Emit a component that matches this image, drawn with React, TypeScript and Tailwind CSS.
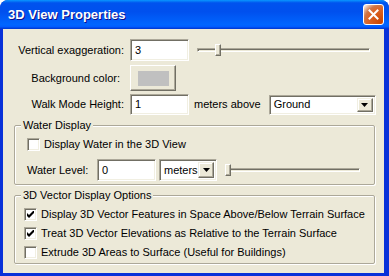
import React from 'react';

const font = { fontFamily: '"Liberation Sans", Arial, sans-serif' };

const sunken =
  'border border-t-[#ACA899] border-l-[#ACA899] border-r-white border-b-white shadow-[inset_1px_1px_0_#716F64,inset_-1px_-1px_0_#F1EFE2] bg-white';

const TextBox = ({ value, className }: { value: string; className: string }) => (
  <div className={`${sunken} flex items-center pl-[4px] text-[11px] text-black ${className}`}>{value}</div>
);

const DropArrow = () => (
  <div className="w-[16px] h-full flex items-center justify-center bg-[#ECE9D8] border border-t-[#F1EFE2] border-l-[#F1EFE2] border-r-[#716F64] border-b-[#716F64] shadow-[inset_-1px_-1px_0_#ACA899,inset_1px_1px_0_#fff]">
    <svg width="7" height="4" viewBox="0 0 7 4">
      <path d="M0 0h7L3.5 4z" fill="#000" />
    </svg>
  </div>
);

const Select = ({ value, className }: { value: string; className: string }) => (
  <div className={`${sunken} flex items-stretch p-[2px] ${className}`}>
    <div className="flex-1 flex items-center pl-[2px] text-[11px] text-black">{value}</div>
    <DropArrow />
  </div>
);

const Slider = ({ className, thumb }: { className: string; thumb: number }) => (
  <div className={`relative h-[22px] flex items-center ${className}`}>
    <div className="w-full h-[4px] border border-t-[#ACA899] border-l-[#ACA899] border-r-white border-b-white bg-[#ECE9D8] shadow-[inset_1px_1px_0_#716F64]" />
    <div
      className="absolute top-[5px] w-[6px] h-[12px] bg-[#ECE9D8] border border-t-white border-l-white border-r-[#716F64] border-b-[#716F64] shadow-[inset_-1px_-1px_0_#ACA899]"
      style={{ left: thumb }}
    />
  </div>
);

const CheckBox = ({ checked, label }: { checked?: boolean; label: string }) => (
  <div className="flex items-center h-[13px]">
    <div className={`w-[13px] h-[13px] flex items-center justify-center ${sunken}`}>
      {checked && (
        <svg width="7" height="7" viewBox="0 0 7 7">
          <path d="M0 2v3l2 2 5-5V-1L2 4z" fill="#000" />
        </svg>
      )}
    </div>
    <span className="ml-[4px] text-[11px] text-black whitespace-nowrap">{label}</span>
  </div>
);

const Group = ({ title, className, children }: { title: string; className: string; children: React.ReactNode }) => (
  <div className={`relative border border-[#ACA899] rounded-[2px] shadow-[1px_1px_0_#fff,inset_1px_1px_0_#fff] ${className}`}>
    <span className="absolute -top-[8px] left-[6px] px-[2px] bg-[#ECE9D8] text-[11px] text-black leading-[14px]">{title}</span>
    {children}
  </div>
);

export default function App() {
  return (
    <div className="w-[389px] h-[276px] bg-[#0831D9] rounded-t-[8px] flex flex-col overflow-hidden" style={font}>
      <div className="h-[29px] flex items-center pl-[8px] pr-[5px] bg-[linear-gradient(to_bottom,#0997FF_0%,#0053EE_10%,#0050EE_40%,#0066FF_85%,#005BFF_93%,#003DD7_97%,#003DD7_100%)]">
        <span className="text-white font-bold text-[13px] tracking-[0px] [text-shadow:1px_1px_#0F1089]">3D View Properties</span>
        <div className="ml-auto w-[21px] h-[21px] rounded-[3px] border border-white bg-[radial-gradient(circle_at_90%_90%,#CC4600_0%,#DC6527_55%,#CD7546_70%,#FFFFFF_100%)] flex items-center justify-center">
          <svg width="11" height="11" viewBox="0 0 11 11">
            <path d="M1.5 1.5l8 8M9.5 1.5l-8 8" stroke="#fff" strokeWidth="2" strokeLinecap="square" />
          </svg>
        </div>
      </div>
      <div className="flex-1 ml-[3px] mr-[5px] mb-[3px] bg-[#ECE9D8] flex flex-col text-[11px] text-black">
        <div className="mt-[10px] flex items-center h-[22px]">
          <span className="w-[121px] text-right">Vertical exaggeration:</span>
          <TextBox value="3" className="ml-[6px] w-[59px] h-[22px]" />
          <Slider className="ml-[8px] w-[173px]" thumb={18} />
        </div>
        <div className="mt-[4px] flex items-center h-[26px]">
          <span className="w-[121px] text-right pr-[4px]">Background color:</span>
          <div className="ml-[6px] w-[46px] h-[26px] bg-[#ECE9D8] border border-t-white border-l-white border-r-[#716F64] border-b-[#716F64] shadow-[inset_-1px_-1px_0_#ACA899] flex items-center justify-center">
            <div className="w-[31px] h-[15px] bg-[#C0C0C0]" />
          </div>
        </div>
        <div className="mt-[3px] flex items-center h-[21px]">
          <span className="w-[121px] text-right">Walk Mode Height:</span>
          <TextBox value="1" className="ml-[6px] w-[59px] h-[21px]" />
          <span className="ml-[5px]">meters above</span>
          <Select value="Ground" className="ml-[8px] w-[107px] h-[20px]" />
        </div>
        <Group title="Water Display" className="mt-[10px] ml-[11px] mr-[9px] h-[60px]">
          <div className="pl-[12px] pt-[12px]">
            <CheckBox label="Display Water in the 3D View" />
          </div>
          <div className="pl-[12px] mt-[8px] flex items-center h-[22px]">
            <span className="w-[70px]">Water Level:</span>
            <TextBox value="0" className="w-[59px] h-[22px]" />
            <Select value="meters" className="ml-[3px] w-[58px] h-[22px]" />
            <Slider className="ml-[8px] w-[135px]" thumb={0} />
          </div>
        </Group>
        <Group title="3D Vector Display Options" className="mt-[10px] ml-[11px] mr-[9px] h-[69px]">
          <div className="pl-[9px] pt-[12px] flex flex-col gap-[6px]">
            <CheckBox checked label="Display 3D Vector Features in Space Above/Below Terrain Surface" />
            <CheckBox checked label="Treat 3D Vector Elevations as Relative to the Terrain Surface" />
            <CheckBox label="Extrude 3D Areas to Surface (Useful for Buildings)" />
          </div>
        </Group>
      </div>
    </div>
  );
}
